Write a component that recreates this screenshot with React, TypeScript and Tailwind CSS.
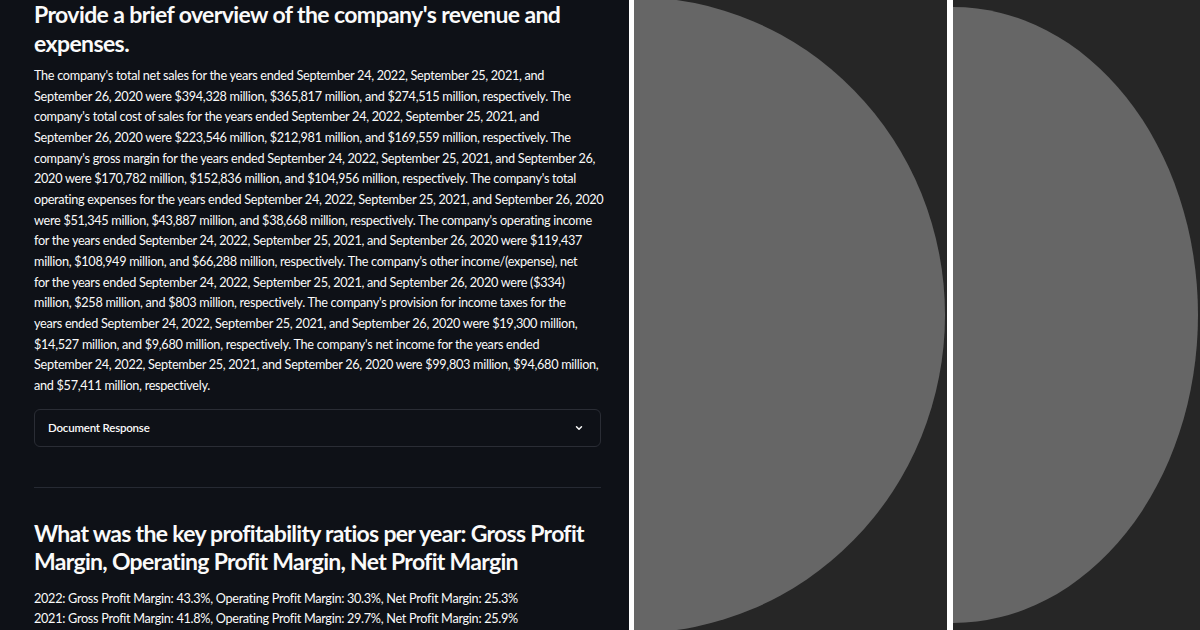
import React from 'react';

const overview = [
  "The company's total net sales for the years ended September 24, 2022, September 25, 2021, and",
  "September 26, 2020 were $394,328 million, $365,817 million, and $274,515 million, respectively. The",
  "company's total cost of sales for the years ended September 24, 2022, September 25, 2021, and",
  "September 26, 2020 were $223,546 million, $212,981 million, and $169,559 million, respectively. The",
  "company's gross margin for the years ended September 24, 2022, September 25, 2021, and September 26,",
  "2020 were $170,782 million, $152,836 million, and $104,956 million, respectively. The company's total",
  "operating expenses for the years ended September 24, 2022, September 25, 2021, and September 26, 2020",
  "were $51,345 million, $43,887 million, and $38,668 million, respectively. The company's operating income",
  "for the years ended September 24, 2022, September 25, 2021, and September 26, 2020 were $119,437",
  "million, $108,949 million, and $66,288 million, respectively. The company's other income/(expense), net",
  "for the years ended September 24, 2022, September 25, 2021, and September 26, 2020 were ($334)",
  "million, $258 million, and $803 million, respectively. The company's provision for income taxes for the",
  "years ended September 24, 2022, September 25, 2021, and September 26, 2020 were $19,300 million,",
  "$14,527 million, and $9,680 million, respectively. The company's net income for the years ended",
  "September 24, 2022, September 25, 2021, and September 26, 2020 were $99,803 million, $94,680 million,",
  "and $57,411 million, respectively.",
];

const ratios = [
  '2022: Gross Profit Margin: 43.3%, Operating Profit Margin: 30.3%, Net Profit Margin: 25.3%',
  '2021: Gross Profit Margin: 41.8%, Operating Profit Margin: 29.7%, Net Profit Margin: 25.9%',
];

function Lines({ lines }: { lines: string[] }) {
  return (
    <p className="text-[12.7px] leading-[20.67px] text-[#fafafa] tracking-[-0.3px]">
      {lines.map((l, i) => (
        <span key={i} className="block whitespace-nowrap">
          {l}
        </span>
      ))}
    </p>
  );
}

function Heading({ lines, className }: { lines: string[]; className?: string }) {
  return (
    <h2 className={`text-[23px] font-bold text-[#fafafa] tracking-[-0.6px] ${className ?? ''}`}>
      {lines.map((l, i) => (
        <span key={i} className="block whitespace-nowrap">
          {l}
        </span>
      ))}
    </h2>
  );
}

// половинка эллипса на тёмном фоне
function HalfDisc({ rx, ry }: { rx: number; ry: number }) {
  return (
    <svg className="w-full h-full" viewBox={`0 0 ${rx + 2} 630`} preserveAspectRatio="none">
      <ellipse cx="0" cy="315" rx={rx} ry={ry} fill="#666666" />
    </svg>
  );
}

export default function App() {
  return (
    <div
      className="flex w-[1200px] h-[630px] overflow-hidden bg-white"
      style={{ fontFamily: 'Lato, "Noto Sans", sans-serif' }}
    >
      <div className="w-[629px] shrink-0 bg-[#0e1117] pl-[34px] pr-[28px] overflow-hidden">
        <Heading
          className="leading-[29px]"
          lines={["Provide a brief overview of the company's revenue and", 'expenses.']}
        />

        <div className="mt-[7px]">
          <Lines lines={overview} />
        </div>

        <div className="mt-[13px] h-[38px] rounded-md border border-[#2a2d35] flex items-center justify-between pl-[13px] pr-[16px]">
          <span className="text-[11.5px] font-semibold text-[#fafafa] tracking-[-0.2px]">Document Response</span>
          <svg width="10" height="10" viewBox="0 0 24 24" fill="none" stroke="#fafafa" strokeWidth="3.5" strokeLinecap="round" strokeLinejoin="round">
            <path d="M6 9l6 6 6-6" />
          </svg>
        </div>

        <div className="mt-[40px] border-t border-[#262a33]" />

        <Heading
          className="mt-[31px] leading-[28px] tracking-[-0.7px]"
          lines={[
            'What was the key profitability ratios per year: Gross Profit',
            'Margin, Operating Profit Margin, Net Profit Margin',
          ]}
        />

        <div className="mt-[13px]">
          <Lines lines={ratios} />
        </div>
      </div>

      <div className="w-[5px] shrink-0 bg-white" />

      <div className="w-[313px] shrink-0 bg-[#262626]">
        <HalfDisc rx={312} ry={318} />
      </div>

      <div className="w-[6px] shrink-0 bg-white" />

      <div className="flex-1 bg-[#262626]">
        <HalfDisc rx={245} ry={308} />
      </div>
    </div>
  );
}
